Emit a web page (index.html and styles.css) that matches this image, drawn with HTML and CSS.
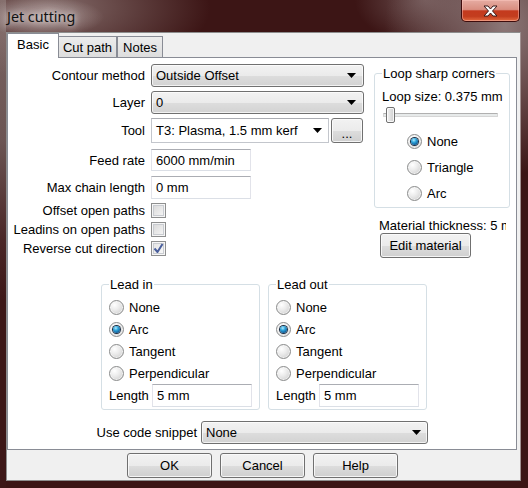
FILE: index.html
```html
<!DOCTYPE html>
<html>
<head>
<meta charset="utf-8">
<link rel="stylesheet" href="styles.css">
</head>
<body>
<div class="window">
  <div class="titlebar">
    <span class="title">Jet cutting</span>
    <div class="close">
      <svg width="15" height="12" viewBox="0 0 15 12"><path d="M1 1h4l2.5 3 2.5-3h4l-4.5 5 4.5 5h-4l-2.5-3-2.5 3h-4l4.5-5z" fill="#fff" stroke="#3a1a1a" stroke-width="1" stroke-linejoin="round"/></svg>
    </div>
  </div>
  <div class="client">
    <div class="tabs">
      <div class="tab active">Basic</div>
      <div class="tab cut">Cut path</div>
      <div class="tab notes">Notes</div>
    </div>
    <div class="panel">
      <div class="top">
        <div class="form">
          <div class="row r1"><span class="lbl">Contour method</span><div class="select w213"><span>Outside Offset</span><svg class="arrow" width="9" height="5" viewBox="0 0 9 5"><path d="M0 0h9L4.5 5z"/></svg></div></div>
          <div class="row r2"><span class="lbl">Layer</span><div class="select w213"><span>0</span><svg class="arrow" width="9" height="5" viewBox="0 0 9 5"><path d="M0 0h9L4.5 5z"/></svg></div></div>
          <div class="row r3"><span class="lbl">Tool</span><div class="combo"><span>T3: Plasma, 1.5 mm kerf</span><svg class="arrow" width="9" height="5" viewBox="0 0 9 5"><path d="M0 0h9L4.5 5z"/></svg></div><div class="btn dots">...</div></div>
          <div class="row r4"><span class="lbl">Feed rate</span><div class="input">6000 mm/min</div></div>
          <div class="row r5"><span class="lbl">Max chain length</span><div class="input">0 mm</div></div>
          <div class="row rc first"><span class="lbl">Offset open paths</span><span class="cb"></span></div>
          <div class="row rc"><span class="lbl">Leadins on open paths</span><span class="cb"></span></div>
          <div class="row rc"><span class="lbl">Reverse cut direction</span><span class="cb on"><svg width="11" height="11" viewBox="0 0 11 11"><path d="M1.5 5.5l3 3.5 5-8" fill="none" stroke="#4a5f9c" stroke-width="2" stroke-linejoin="round"/></svg></span></div>
        </div>
        <div class="side">
          <fieldset class="group loop">
            <legend>Loop sharp corners</legend>
            <div class="loopsize">Loop size: 0.375 mm</div>
            <div class="slider"><div class="track"></div><div class="thumb"></div></div>
            <div class="loopradios">
              <div class="ropt"><span class="rb on"></span>None</div>
              <div class="ropt"><span class="rb"></span>Triangle</div>
              <div class="ropt"><span class="rb"></span>Arc</div>
            </div>
          </fieldset>
          <div class="material">Material thickness: 5 mm</div>
          <div class="btn edit">Edit material</div>
        </div>
      </div>
      <div class="leads">
        <fieldset class="group lead">
          <legend>Lead in</legend>
          <div class="lopt"><span class="rb"></span>None</div>
          <div class="lopt"><span class="rb on"></span>Arc</div>
          <div class="lopt"><span class="rb"></span>Tangent</div>
          <div class="lopt"><span class="rb"></span>Perpendicular</div>
          <div class="lenrow"><span class="lenlbl">Length</span><div class="input w100">5 mm</div></div>
        </fieldset>
        <fieldset class="group lead">
          <legend>Lead out</legend>
          <div class="lopt"><span class="rb"></span>None</div>
          <div class="lopt"><span class="rb on"></span>Arc</div>
          <div class="lopt"><span class="rb"></span>Tangent</div>
          <div class="lopt"><span class="rb"></span>Perpendicular</div>
          <div class="lenrow"><span class="lenlbl">Length</span><div class="input w100">5 mm</div></div>
        </fieldset>
      </div>
      <div class="snippet"><span class="snlbl">Use code snippet</span><div class="select w227"><span>None</span><svg class="arrow" width="9" height="5" viewBox="0 0 9 5"><path d="M0 0h9L4.5 5z"/></svg></div></div>
    </div>
    <div class="buttons">
      <div class="btn dlg">OK</div>
      <div class="btn dlg">Cancel</div>
      <div class="btn dlg">Help</div>
    </div>
  </div>
</div>
</body>
</html>
```
FILE: styles.css
```css
* { box-sizing: border-box; }
body {
  margin: 0;
  width: 528px;
  height: 488px;
  overflow: hidden;
  font-family: "Liberation Sans", Arial, sans-serif;
  font-size: 13px;
  line-height: 15px;
  color: #000;
}
.window {
  width: 528px;
  height: 488px;
  display: flex;
  flex-direction: column;
  background:
    radial-gradient(ellipse 62px 20px at 42px 17px, rgba(225,212,212,.55), rgba(225,212,212,0)),
    radial-gradient(ellipse 160px 70px at 50px 8px, rgba(140,118,116,.9), rgba(140,118,116,0)),
    radial-gradient(ellipse 120px 150px at 505px 25px, rgba(145,125,125,.95), rgba(145,125,125,0)),
    radial-gradient(ellipse 70px 45px at 425px 0px, rgba(120,95,95,.8), rgba(120,95,95,0)),
    linear-gradient(180deg, #7a6462 0px, #6c5553 140px, #4a2626 240px, #3d1717 300px) left top / 6px 100% no-repeat,
    #3c1515;
}
.titlebar {
  height: 32px;
  flex: none;
  display: flex;
  justify-content: space-between;
  align-items: flex-start;
}
.title {
  margin: 7px 0 0 7px;
  font-family: "Noto Sans", "Open Sans", sans-serif;
  font-size: 14.3px;
  line-height: 19px;
  color: #111;
  text-shadow: 0 0 6px rgba(255,255,255,.85), 0 0 12px rgba(255,255,255,.5);
}
.close {
  width: 59px;
  height: 22px;
  margin-right: 8px;
  border: 1px solid #3e0c0c;
  border-top: none;
  border-radius: 0 0 5px 5px;
  background: linear-gradient(#e6aca2 0%, #d98e80 45%, #c43a1e 52%, #c33d1e 78%, #e2693f 100%);
  box-shadow: inset 0 0 0 1px rgba(255,205,195,.45);
  display: flex;
  align-items: center;
  justify-content: center;
}
.client {
  margin-left: 6px;
  width: 515px;
  height: 449px;
  border: 1px solid #8d8d8d;
  border-right-color: #a09090;
  background: #f0f0f0;
  display: flex;
  flex-direction: column;
}
.tabs {
  display: flex;
  align-items: flex-end;
  height: 25px;
  flex: none;
}
.tab {
  height: 21px;
  margin-bottom: 1px;
  border: 1px solid #898c95;
  border-bottom: none;
  background: linear-gradient(#ececec, #dddddd);
  padding-top: 3px;
  text-align: center;
}
.tab.active {
  width: 52px;
  height: 25px;
  margin-bottom: 0;
  background: #fff;
  position: relative;
  z-index: 1;
}
.tab.cut { width: 59px; margin-left: -1px; }
.tab.notes { width: 46px; }
.panel {
  margin-top: -1px;
  width: 510px;
  height: 393px;
  flex: none;
  border: 1px solid #898c95;
  background: #fff;
  padding: 6px 0 0 0;
}
.top { display: flex; }
.form { width: 356px; display: flex; flex-direction: column; }
.row { display: flex; align-items: center; gap: 6px; }
.lbl { width: 137px; text-align: right; white-space: nowrap; flex: none; }
.r1 { height: 23px; }
.r2 { height: 23px; margin-top: 4px; }
.r3 { height: 25px; margin-top: 4px; gap: 6px; }
.r4 { height: 22px; margin-top: 6px; }
.r5 { height: 23px; margin-top: 5px; }
.rc { height: 19px; }
.rc.first { margin-top: 2px; }

.select {
  height: 100%;
  border: 1px solid #707070;
  border-radius: 3px;
  background: linear-gradient(#f2f2f2 0%, #ebebeb 50%, #dddddd 51%, #d2d2d2 100%);
  box-shadow: inset 0 0 0 1px rgba(255,255,255,.7);
  display: flex;
  align-items: center;
  justify-content: space-between;
  padding: 0 7px 0 4px;
}
.w213 { width: 213px; }
.w227 { width: 227px; height: 23px; padding-right: 6px; }
.combo {
  width: 178px;
  height: 25px;
  border: 1px solid #c3c6cc;
  border-top-color: #abadb3;
  background: #fff;
  display: flex;
  align-items: center;
  justify-content: space-between;
  padding: 0 6px 0 4px;
  white-space: nowrap;
}
.arrow { fill: #000; flex: none; }
.btn {
  border: 1px solid #707070;
  border-radius: 3px;
  background: linear-gradient(#f2f2f2 0%, #ebebeb 50%, #dddddd 51%, #cfcfcf 100%);
  box-shadow: inset 0 0 0 1px rgba(252,252,252,.85);
  display: flex;
  align-items: center;
  justify-content: center;
}
.dots { width: 32px; height: 25px; margin-left: -4px; padding-top: 5px; }
.input {
  width: 100px;
  height: 100%;
  border: 1px solid #dbdfe6;
  border-top-color: #abadb3;
  border-left-color: #e2e3ea;
  border-right-color: #e2e3ea;
  background: #fff;
  display: flex;
  align-items: center;
  padding-left: 4px;
}
.w100 { height: 23px; }
.cb {
  width: 15px;
  height: 15px;
  border: 1px solid #8e8f8f;
  background: linear-gradient(135deg, #d6d6d6, #f9f9f9);
  box-shadow: inset 0 0 0 1px #f6f6f6, inset 0 0 0 2px #c9ccd1;
  display: flex;
  align-items: center;
  justify-content: center;
  flex: none;
}
.cb.on { background: linear-gradient(135deg, #e2e2e2, #fbfbfb); }

.side { width: 136px; margin-left: 10px; display: flex; flex-direction: column; }
.group {
  margin: 0;
  border: 1px solid #d5dfe5;
  border-radius: 3px;
  min-width: 0;
}
.group legend { padding: 0 1px; line-height: 15px; }
.loop { margin-top: 2px; width: 136px; padding: 8px 7px 1px 7px; }
.loopsize { white-space: nowrap; }
.slider { display: grid; height: 16px; margin-top: 3px; }
.track {
  grid-area: 1 / 1;
  align-self: center;
  margin-left: 1px;
  width: 115px;
  height: 4px;
  border: 1px solid #d6d6d6;
  border-top-color: #b0b0b0;
  background: #e7eaea;
  border-radius: 1px;
}
.thumb {
  grid-area: 1 / 1;
  justify-self: start;
  margin-left: 4px;
  width: 9px;
  height: 16px;
  border: 1px solid #707070;
  border-radius: 2px;
  background: linear-gradient(90deg, #f4f4f4, #e0e0e0 50%, #d0d0d0);
  box-shadow: inset 0 0 0 1px rgba(255,255,255,.8);
}
.loopradios { margin-top: 5px; padding-left: 25px; }
.ropt { height: 26px; display: flex; align-items: center; gap: 5px; }
.rb {
  width: 15px;
  height: 15px;
  border-radius: 50%;
  border: 1px solid #8a8b8b;
  background: radial-gradient(circle at 35% 30%, #ffffff 0%, #ececec 40%, #c8c8c8 100%);
  box-shadow: inset 0 0 0 1px rgba(250,250,250,.7);
  display: flex;
  align-items: center;
  justify-content: center;
  flex: none;
}
.rb.on::after {
  content: "";
  width: 7px;
  height: 7px;
  border-radius: 50%;
  background: radial-gradient(circle at 40% 30%, #b4ecff 0%, #2fa6dc 35%, #0f5c98 75%, #0b3a68 100%);
  box-shadow: 0 0 0 1px #1c2f45;
}
.material {
  margin: 10px 0 0 5px;
  width: 127px;
  overflow: hidden;
  white-space: nowrap;
}
.edit { margin-left: 6px; width: 91px; height: 25px; }

.leads { display: flex; gap: 8px; margin: 19px 0 0 93px; }
.lead { width: 159px; padding: 4px 7px 2px 7px; }
.lopt { height: 22px; display: flex; align-items: center; gap: 5px; }
.lenrow { display: flex; align-items: center; height: 23px; }
.lenlbl { width: 43px; flex: none; }

.snippet { display: flex; align-items: center; margin-top: 11px; }
.snlbl { width: 189px; text-align: right; margin-right: 4px; white-space: nowrap; }

.buttons { display: flex; gap: 8px; margin-top: 3px; padding-left: 120px; }
.dlg { width: 85px; height: 25px; }
```
